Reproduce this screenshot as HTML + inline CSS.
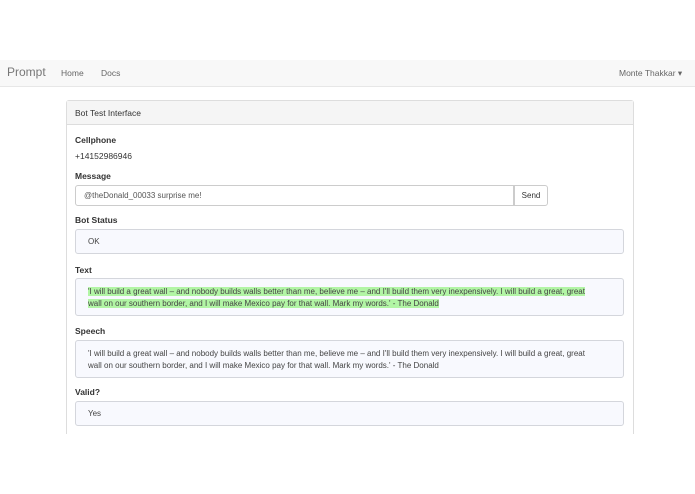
<!DOCTYPE html>
<html><head><style>
*{box-sizing:border-box;margin:0;padding:0}
body{width:695px;height:494px;background:#fff;font-family:"Liberation Sans",sans-serif;color:#333;position:relative;overflow:hidden;font-size:8.5px}
.a{position:absolute}
.nav{left:0;top:60px;width:695px;height:27px;background:#f8f8f8;border-bottom:1px solid #e7e7e7}
.lbl{font-weight:bold;font-size:8.5px;color:#333}
.box{background:#f8f9fe;border:1px solid #d4d6dc;border-radius:3px;left:75px;width:549px;padding:0 12px;color:#444;font-size:8px}
.w{padding-right:24px}
.hl{background:#b2f5a5}
</style></head><body>
<div class="a nav"></div>
<div class="a" style="left:7px;top:65px;font-size:12px;color:#777">Prompt</div>
<div class="a" style="left:61px;top:68px;color:#666">Home</div>
<div class="a" style="left:101px;top:68px;color:#666">Docs</div>
<div class="a" style="left:619px;top:68px;color:#666">Monte Thakkar ▾</div>
<div class="a" style="left:66px;top:100px;width:568px;height:334px;border:1px solid #ddd;border-bottom:none;border-radius:3px 3px 0 0"></div>
<div class="a" style="left:67px;top:101px;width:566px;height:24px;background:#f5f5f5;border-bottom:1px solid #ddd"></div>
<div class="a" style="left:75px;top:108px">Bot Test Interface</div>
<div class="a lbl" style="left:75px;top:135px">Cellphone</div>
<div class="a" style="left:75px;top:151px">+14152986946</div>
<div class="a lbl" style="left:75px;top:171px">Message</div>
<div class="a" style="left:75px;top:185px;width:439px;height:21px;border:1px solid #ccc;border-radius:3px 0 0 3px;padding:5px 8px;font-size:8px;color:#555">@theDonald_00033 surprise me!</div>
<div class="a" style="left:514px;top:185px;width:34px;height:21px;border:1px solid #ccc;border-radius:0 3px 3px 0;padding:5px 0;text-align:center;font-size:8px">Send</div>
<div class="a lbl" style="left:75px;top:215px">Bot Status</div>
<div class="a box" style="top:229px;height:25px;line-height:24px">OK</div>
<div class="a lbl" style="left:75px;top:265px">Text</div>
<div class="a box w" style="top:278px;height:38px;padding-top:7px;line-height:12px"><span class="hl">'I will build a great wall – and nobody builds walls better than me, believe me – and I'll build them very inexpensively. I will build a great, great wall on our southern border, and I will make Mexico pay for that wall. Mark my words.' - The Donald</span></div>
<div class="a lbl" style="left:75px;top:326px">Speech</div>
<div class="a box w" style="top:340px;height:38px;padding-top:7px;line-height:12px">'I will build a great wall – and nobody builds walls better than me, believe me – and I'll build them very inexpensively. I will build a great, great wall on our southern border, and I will make Mexico pay for that wall. Mark my words.' - The Donald</div>
<div class="a lbl" style="left:75px;top:387px">Valid?</div>
<div class="a box" style="top:401px;height:25px;line-height:24px">Yes</div>
</body></html>
